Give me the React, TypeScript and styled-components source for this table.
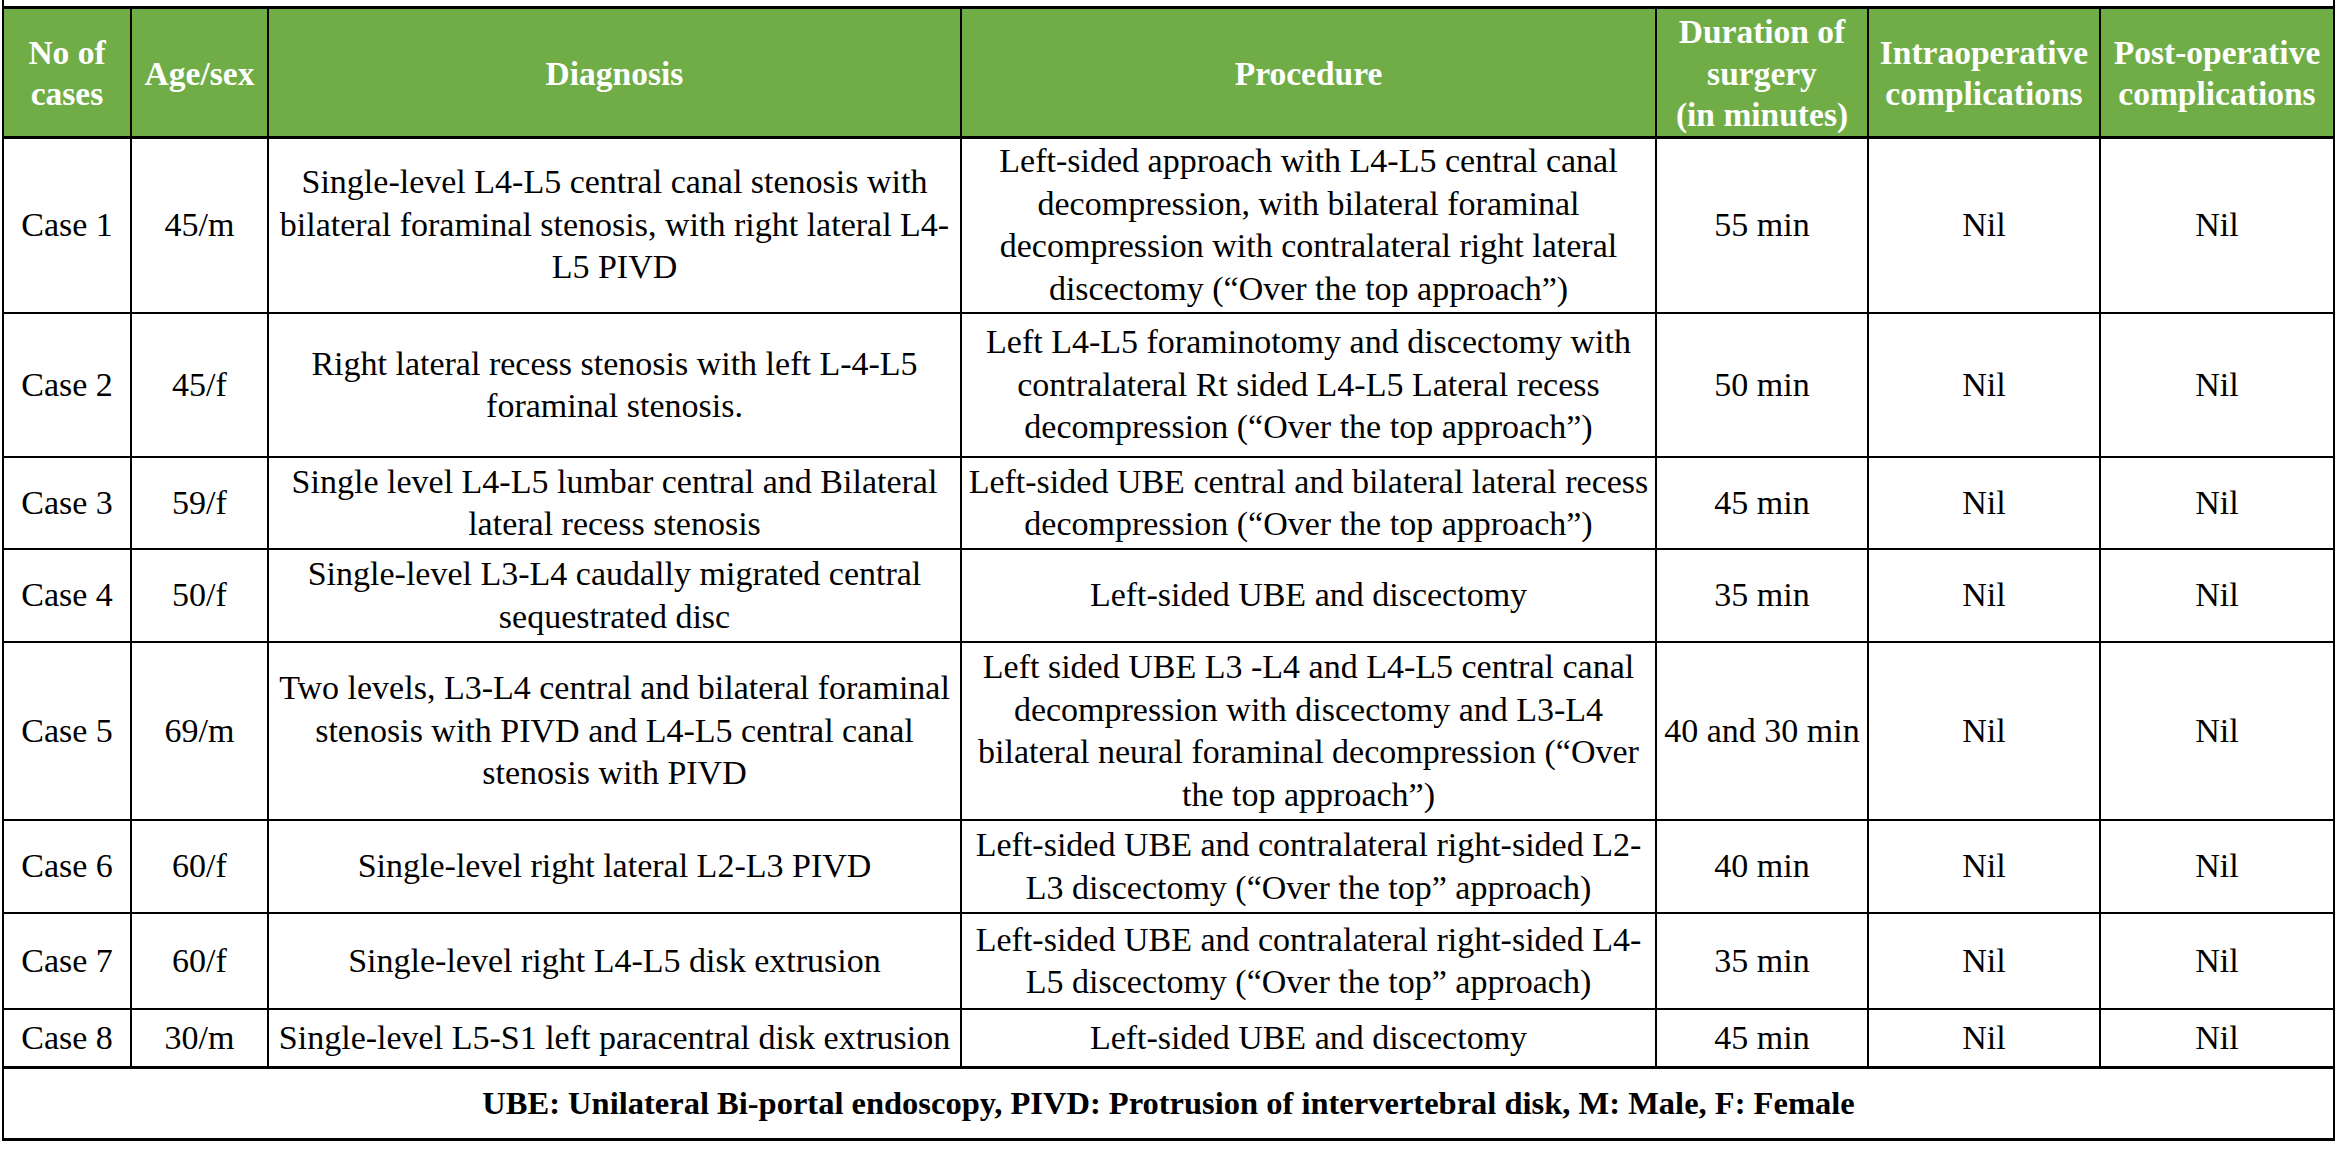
import React from "react";
import styled, { createGlobalStyle } from "styled-components";

const SERIF = `"Liberation Serif", "Times New Roman", Times, "DejaVu Serif", serif`;

const GlobalStyle = createGlobalStyle`
  html, body {
    margin: 0;
    padding: 0;
    background: #fff;
  }
  body {
    font-family: ${SERIF};
    color: #000;
  }
`;

const COLS = "128px 137px 693px 695px 212px 232px 232px";

const Frame = styled.div`
  box-sizing: border-box;
  width: 2333px;
  margin-left: 2px;
  padding-top: 6px;
  border-left: 2px solid #000;
  border-right: 2px solid #000;
  font-family: ${SERIF};
  color: #000;
`;

const Row = styled.div<{ $h: number; $head?: boolean }>`
  display: grid;
  grid-template-columns: ${COLS};
  height: ${(p) => p.$h}px;
  box-sizing: border-box;
  border-top: ${(p) => (p.$head ? "3px solid #000" : "none")};
  background: ${(p) => (p.$head ? "#70ad47" : "#fff")};
`;

const Cell = styled.div<{ $bb?: number }>`
  display: flex;
  align-items: center;
  justify-content: center;
  box-sizing: border-box;
  padding: 0 2px;
  text-align: center;
  white-space: nowrap;
  font-family: ${SERIF};
  font-size: 34px;
  line-height: 42.5px;
  border-right: 2px solid #000;
  border-bottom: ${(p) => p.$bb ?? 2}px solid #000;
  &:last-child {
    border-right: none;
  }
`;

const HeadCell = styled(Cell)`
  padding-top: 2px;
  color: #fff;
  font-weight: 700;
  font-size: 33.5px;
  line-height: 41.5px;
`;

const Footer = styled.div`
  display: flex;
  align-items: center;
  justify-content: center;
  box-sizing: border-box;
  height: 72px;
  border-bottom: 3px solid #000;
  font-family: ${SERIF};
  font-weight: 700;
  font-size: 32.5px;
  white-space: nowrap;
`;

type Case = {
  h: number;
  age: string;
  diagnosis: string[];
  procedure: string[];
  duration: string;
};

const cases: Case[] = [
  {
    h: 176,
    age: "45/m",
    diagnosis: [
      "Single-level L4-L5 central canal stenosis with",
      "bilateral foraminal stenosis, with right lateral L4-",
      "L5 PIVD",
    ],
    procedure: [
      "Left-sided approach with L4-L5 central canal",
      "decompression, with bilateral foraminal",
      "decompression with contralateral right lateral",
      "discectomy (\u201cOver the top approach\u201d)",
    ],
    duration: "55 min",
  },
  {
    h: 144,
    age: "45/f",
    diagnosis: [
      "Right lateral recess stenosis with left L-4-L5",
      "foraminal stenosis.",
    ],
    procedure: [
      "Left L4-L5 foraminotomy and discectomy with",
      "contralateral Rt sided L4-L5 Lateral recess",
      "decompression (\u201cOver the top approach\u201d)",
    ],
    duration: "50 min",
  },
  {
    h: 92,
    age: "59/f",
    diagnosis: [
      "Single level L4-L5 lumbar central and Bilateral",
      "lateral recess stenosis",
    ],
    procedure: [
      "Left-sided UBE central and bilateral lateral recess",
      "decompression (\u201cOver the top approach\u201d)",
    ],
    duration: "45 min",
  },
  {
    h: 93,
    age: "50/f",
    diagnosis: [
      "Single-level L3-L4 caudally migrated central",
      "sequestrated disc",
    ],
    procedure: ["Left-sided UBE and discectomy"],
    duration: "35 min",
  },
  {
    h: 178,
    age: "69/m",
    diagnosis: [
      "Two levels, L3-L4 central and bilateral foraminal",
      "stenosis with PIVD and L4-L5 central canal",
      "stenosis with PIVD",
    ],
    procedure: [
      "Left sided UBE L3 -L4 and L4-L5 central canal",
      "decompression with discectomy and L3-L4",
      "bilateral neural foraminal decompression (\u201cOver",
      "the top approach\u201d)",
    ],
    duration: "40 and 30 min",
  },
  {
    h: 93,
    age: "60/f",
    diagnosis: ["Single-level right lateral L2-L3 PIVD"],
    procedure: [
      "Left-sided UBE and contralateral right-sided L2-",
      "L3 discectomy (\u201cOver the top\u201d approach)",
    ],
    duration: "40 min",
  },
  {
    h: 96,
    age: "60/f",
    diagnosis: ["Single-level right L4-L5 disk extrusion"],
    procedure: [
      "Left-sided UBE and contralateral right-sided L4-",
      "L5 discectomy (\u201cOver the top\u201d approach)",
    ],
    duration: "35 min",
  },
  {
    h: 59,
    age: "30/m",
    diagnosis: ["Single-level L5-S1 left paracentral disk extrusion"],
    procedure: ["Left-sided UBE and discectomy"],
    duration: "45 min",
  },
];

const Lines = ({ lines }: { lines: string[] }) => (
  <div>
    {lines.map((l, i) => (
      <React.Fragment key={i}>
        {i > 0 && <br />}
        {l}
      </React.Fragment>
    ))}
  </div>
);

const headers = [
  ["No of", "cases"],
  ["Age/sex"],
  ["Diagnosis"],
  ["Procedure"],
  ["Duration of", "surgery", "(in minutes)"],
  ["Intraoperative", "complications"],
  ["Post-operative", "complications"],
];

const App = () => {
  return (
    <>
      <GlobalStyle />
      <Frame>
        <Row $h={132} $head>
          {headers.map((h, i) => (
            <HeadCell key={i} $bb={3}>
              <Lines lines={h} />
            </HeadCell>
          ))}
        </Row>
        {cases.map((c, i) => {
          const bb = i === cases.length - 1 ? 3 : 2;
          return (
            <Row key={i} $h={c.h}>
              <Cell $bb={bb}>Case {i + 1}</Cell>
              <Cell $bb={bb}>{c.age}</Cell>
              <Cell $bb={bb}>
                <Lines lines={c.diagnosis} />
              </Cell>
              <Cell $bb={bb}>
                <Lines lines={c.procedure} />
              </Cell>
              <Cell $bb={bb}>{c.duration}</Cell>
              <Cell $bb={bb}>Nil</Cell>
              <Cell $bb={bb}>Nil</Cell>
            </Row>
          );
        })}
        <Footer>
          UBE: Unilateral Bi-portal endoscopy, PIVD: Protrusion of
          intervertebral disk, M: Male, F: Female
        </Footer>
      </Frame>
    </>
  );
};

export default App;
